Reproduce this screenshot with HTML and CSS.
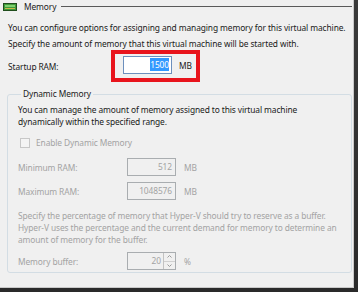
FILE: index.html
```html
<!DOCTYPE html>
<html lang="en">
<head>
    <meta charset="UTF-8">
    <title>Memory</title>
    <link rel="stylesheet" href="styles.css">
</head>
<body>
    <div class="screen">
        <div class="panel">
            <div class="section-title">
                <svg class="chip" width="14" height="8" viewBox="0 0 14 8">
                    <rect x="0.5" y="0.5" width="13" height="7" fill="#3f9a3a" stroke="#1f4d1c"/>
                    <rect x="2" y="2" width="10" height="2" fill="#7fd06f"/>
                    <rect x="2" y="5" width="10" height="1" fill="#c9b84a"/>
                </svg>
                <span class="title-text">Memory</span>
                <span class="title-line"></span>
            </div>

            <p class="intro">You can configure options for assigning and managing memory for this virtual machine.</p>
            <p class="intro">Specify the amount of memory that this virtual machine will be started with.</p>

            <div class="startup-row">
                <span class="label">Startup RAM:</span>
                <div class="highlight">
                    <div class="field focused"><span class="selected">1500</span></div>
                    <span class="unit">MB</span>
                </div>
            </div>

            <fieldset class="group">
                <legend>Dynamic Memory</legend>
                <p class="group-text">You can manage the amount of memory assigned to this virtual machine<br>dynamically within the specified range.</p>

                <label class="check disabled">
                    <span class="box"></span>
                    Enable Dynamic Memory
                </label>

                <div class="row disabled">
                    <span class="label">Minimum RAM:</span>
                    <div class="field">512</div>
                    <span class="unit">MB</span>
                </div>
                <div class="row disabled">
                    <span class="label">Maximum RAM:</span>
                    <div class="field">1048576</div>
                    <span class="unit">MB</span>
                </div>

                <p class="group-text disabled buffer-text">Specify the percentage of memory that Hyper-V should try to reserve as a buffer.<br>Hyper-V uses the percentage and the current demand for memory to determine an<br>amount of memory for the buffer.</p>

                <div class="row disabled">
                    <span class="label">Memory buffer:</span>
                    <div class="field spin">
                        <span class="value">20</span>
                        <span class="arrows">
                            <span class="arrow">
                                <svg width="5" height="3" viewBox="0 0 5 3"><path d="M0.5 2.5 L2.5 0.5 L4.5 2.5" fill="none" stroke="#9a9a9a"/></svg>
                            </span>
                            <span class="arrow">
                                <svg width="5" height="3" viewBox="0 0 5 3"><path d="M0.5 0.5 L2.5 2.5 L4.5 0.5" fill="none" stroke="#9a9a9a"/></svg>
                            </span>
                        </span>
                    </div>
                    <span class="unit pct">%</span>
                </div>
            </fieldset>
        </div>
    </div>
</body>
</html>
```

FILE: styles.css
```css
html, body {
    margin: 0;
    padding: 0;
}
body {
    width: 358px;
    height: 292px;
    overflow: hidden;
    font-family: "Noto Sans", sans-serif;
    font-size: 8.4px;
    letter-spacing: -0.1px;
    color: #1a1a1a;
}
.screen {
    width: 358px;
    height: 292px;
    box-sizing: border-box;
    padding: 0 4px 4px 0;
    background: linear-gradient(#3a3a3a, #2a2a2a);
}
.panel {
    height: 100%;
    box-sizing: border-box;
    background: #f0f0f0;
    border-right: 1px solid #c9c9c9;
    border-bottom: 1px solid #c9c9c9;
    padding-top: 1px;
    white-space: nowrap;
}
.section-title {
    display: flex;
    align-items: center;
    height: 11px;
    padding-left: 3px;
    padding-right: 1px;
}
.chip { margin-right: 7px; }
.title-text { margin-right: 5px; }
.title-line {
    flex: 1;
    height: 1px;
    background: #5a5a5a;
}
.intro {
    margin: 0;
    padding-left: 8px;
    height: 16px;
    line-height: 16px;
}
.section-title + .intro { margin-top: 8px; }
.startup-row {
    display: flex;
    align-items: center;
    padding-left: 8px;
    margin-top: -2px;
}
.startup-row .label { width: 103px; }
.highlight {
    display: flex;
    align-items: center;
    border: 4px solid #e8141c;
    padding: 2px 4px 4px 8px;
}
.field {
    box-sizing: border-box;
    width: 49px;
    height: 18px;
    border: 1px solid #a9adb0;
    background: #f0f0f0;
    text-align: right;
    line-height: 16px;
    padding-right: 3px;
}
.field.focused {
    border-color: #6c8fbd;
    background: #fff;
    padding-right: 2px;
}
.selected {
    background: #3399ff;
    color: #fff;
    padding: 1px 0;
}
.unit { margin-left: 7px; }
.group {
    margin: 7px 1px 0 7px;
    padding: 5px 10px 2px 10px;
    border: 1px solid #d3dde4;
    border-radius: 3px;
    min-inline-size: 0;
}
.group legend {
    padding: 0 2px;
    margin-left: 3px;
    line-height: 10px;
}
.group-text {
    margin: 0;
    line-height: 12px;
}
.disabled { color: #a3a3a3; }
.check {
    display: flex;
    align-items: center;
    margin-top: 9px;
    margin-left: 2px;
    height: 11px;
}
.box {
    width: 8px;
    height: 8px;
    border: 1px solid #c7c7c7;
    background: #f4f4f4;
    margin-right: 6px;
}
.row {
    display: flex;
    align-items: center;
    margin-top: 6px;
}
.check + .row { margin-top: 10px; }
.row .label { width: 109px; }
.row .unit { margin-left: 8px; }
.buffer-text { margin-top: 10px; }
.buffer-text + .row { margin-top: 6px; }
.spin {
    display: flex;
    justify-content: flex-end;
    padding-right: 0;
}
.spin .value { padding-right: 2px; }
.arrows {
    display: flex;
    flex-direction: column;
    width: 11px;
    border-left: 1px solid #c2c2c2;
}
.arrow {
    flex: 1;
    display: flex;
    align-items: center;
    justify-content: center;
    border-bottom: 1px solid #d0d0d0;
}
.arrow:last-child { border-bottom: 0; }
.pct { margin-left: 9px; }
```
